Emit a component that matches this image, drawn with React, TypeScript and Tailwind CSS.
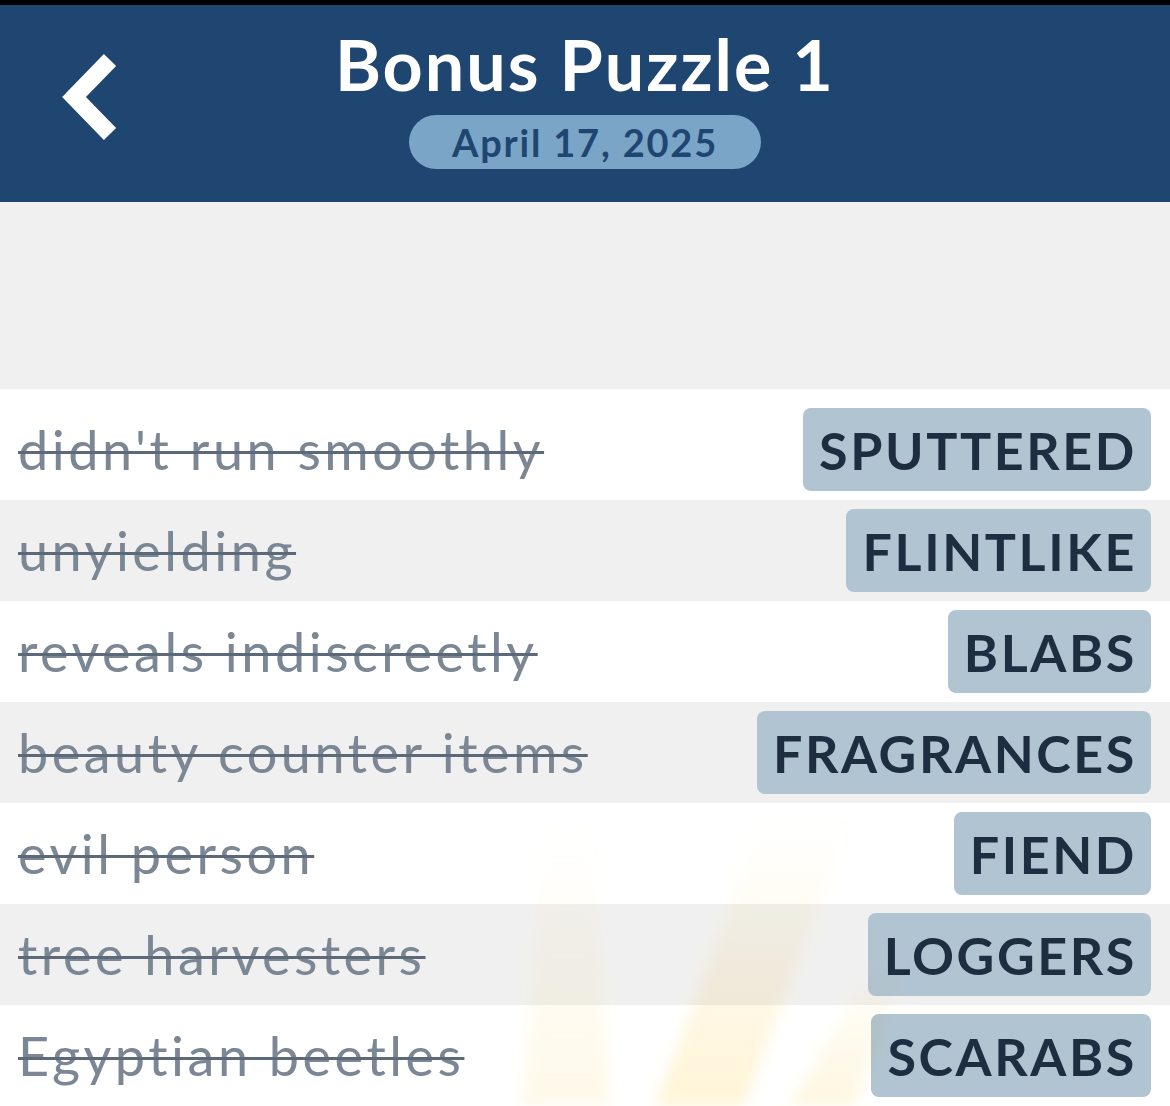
import React from "react";

const clues = [
  { clue: "didn't run smoothly", answer: "SPUTTERED" },
  { clue: "unyielding", answer: "FLINTLIKE" },
  { clue: "reveals indiscreetly", answer: "BLABS" },
  { clue: "beauty counter items", answer: "FRAGRANCES" },
  { clue: "evil person", answer: "FIEND" },
  { clue: "tree harvesters", answer: "LOGGERS" },
  { clue: "Egyptian beetles", answer: "SCARABS" },
];

// faint light rays behind the bottom rows
function Rays() {
  return (
    <svg className="pointer-events-none absolute left-0 bottom-0 w-[1170px] h-[303px] mix-blend-multiply" viewBox="0 0 1170 303">
      <defs>
        <linearGradient id="ray" x1="0" y1="0" x2="0" y2="1">
          <stop offset="0" stopColor="#ffe49a" stopOpacity="0" />
          <stop offset="1" stopColor="#ffe49a" stopOpacity="1" />
        </linearGradient>
        <filter id="soft" x="-20%" y="-20%" width="140%" height="140%">
          <feGaussianBlur stdDeviation="7" />
        </filter>
      </defs>
      <g filter="url(#soft)">
        <polygon points="545,20 590,20 611,303 522,303" fill="url(#ray)" opacity="0.22" />
        <polygon points="760,20 850,20 744,303 655,303" fill="url(#ray)" opacity="0.4" />
        <polygon points="880,150 910,150 855,303 789,303" fill="url(#ray)" opacity="0.3" />
      </g>
    </svg>
  );
}

export default function App() {
  return (
    <div className="w-[1170px] h-[1106px] overflow-hidden bg-white font-['Lato',sans-serif]">
      <div className="h-[5px] bg-black" />
      <header className="relative h-[197px] bg-[#1f4670] flex flex-col items-center">
        <svg className="absolute left-[40px] top-[35px]" width="100" height="110" viewBox="0 0 100 110">
          <path d="M70 20 L34 57 L70 94" fill="none" stroke="white" strokeWidth="17" strokeLinecap="butt" strokeLinejoin="miter" />
        </svg>
        <h1 className="mt-[19px] text-white font-bold text-[70px] leading-[80px] tracking-[2px]">Bonus Puzzle 1</h1>
        <div className="mt-[11px] w-[352px] h-[54px] rounded-full bg-[#7ba5c7] flex items-center justify-center text-[#1f4670] font-bold text-[38px] tracking-[1.8px]">
          April 17, 2025
        </div>
      </header>
      <div className="h-[187px] bg-[#f0f0f0]" />
      <div className="relative pt-[10px] bg-white">
        {clues.map((c, i) => (
          <div
            key={c.answer}
            className={`h-[101px] flex items-center justify-between pl-[18px] pr-[19px] ${i % 2 === 1 ? "bg-[#f0f0f0]" : "bg-white"}`}
          >
            <span className="text-[#7b8794] text-[54px] leading-none tracking-[3.5px] line-through decoration-[#5b6978] decoration-[3px]">
              {c.clue}
            </span>
            <span className="h-[83px] pl-[16px] pr-[14px] rounded-[8px] bg-[#b1c4d2] text-[#1c2e40] font-bold text-[52px] tracking-[2.6px] flex items-center">
              {c.answer}
            </span>
          </div>
        ))}
        <Rays />
      </div>
    </div>
  );
}
